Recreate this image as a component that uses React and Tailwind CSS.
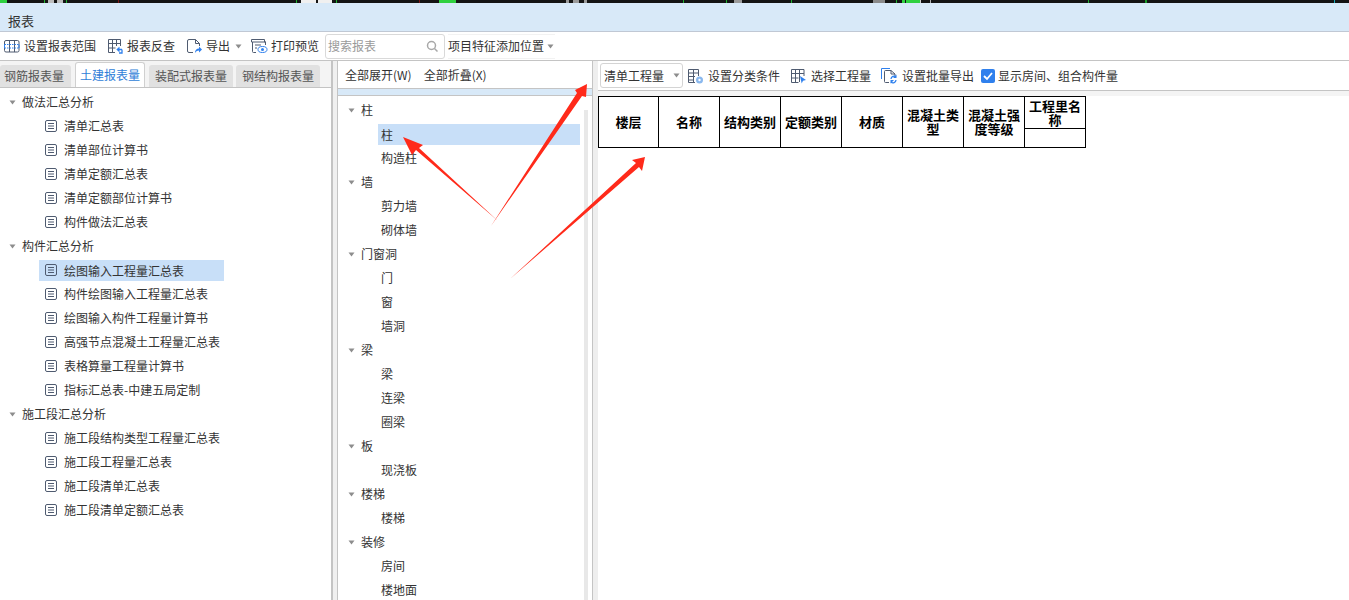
const FONT = "font-['Noto_Sans_CJK_SC','Liberation_Sans',sans-serif]"

const REPORT_TREE = [
  {
    name: '做法汇总分析',
    items: ['清单汇总表', '清单部位计算书', '清单定额汇总表', '清单定额部位计算书', '构件做法汇总表'],
  },
  {
    name: '构件汇总分析',
    items: [
      '绘图输入工程量汇总表',
      '构件绘图输入工程量汇总表',
      '绘图输入构件工程量计算书',
      '高强节点混凝土工程量汇总表',
      '表格算量工程量计算书',
      '指标汇总表-中建五局定制',
    ],
  },
  {
    name: '施工段汇总分析',
    items: ['施工段结构类型工程量汇总表', '施工段工程量汇总表', '施工段清单汇总表', '施工段清单定额汇总表'],
  },
]

const MEMBER_TREE = [
  { name: '柱', items: ['柱', '构造柱'] },
  { name: '墙', items: ['剪力墙', '砌体墙'] },
  { name: '门窗洞', items: ['门', '窗', '墙洞'] },
  { name: '梁', items: ['梁', '连梁', '圈梁'] },
  { name: '板', items: ['现浇板'] },
  { name: '楼梯', items: ['楼梯'] },
  { name: '装修', items: ['房间', '楼地面'] },
]

const COLUMNS = ['楼层', '名称', '结构类别', '定额类别', '材质', '混凝土类型', '混凝土强度等级']

const TICKS = [
  [0, 7, '#2fd13f'], [44, 1, '#1fae2f'], [48, 6, '#bdbdbd'], [57, 6, '#bdbdbd'], [66, 1, '#1fae2f'],
  [118, 1, '#7a1515'], [296, 1, '#1fae2f'], [301, 15, '#f0f0f0'], [318, 14, '#f0f0f0'], [336, 1, '#1fae2f'],
  [419, 1, '#7a1515'], [439, 11, '#2fd13f'], [450, 6, '#2fd13f'], [566, 3, '#9a9a9a'], [573, 6, '#9a9a9a'],
  [584, 3, '#9a9a9a'], [683, 1, '#1fae2f'], [726, 1, '#1fae2f'], [734, 8, '#9a9a9a'], [791, 1, '#1fae2f'],
  [873, 12, '#8a8a8a'], [896, 1, '#1fae2f'], [902, 3, '#2fd13f'], [906, 14, '#2fd13f'], [920, 1, '#d0d0d0'],
  [930, 1, '#b0b0b0'], [1088, 1, '#1fae2f'], [1145, 2, '#1a9a2a'], [1334, 1, '#18a8b8'],
]

const Caret = () => (
  <svg width="9" height="9" viewBox="0 0 9 9" className="shrink-0">
    <path d="M1.500 2.500h6L4.500 6.500z" fill="#8d8d8d" />
  </svg>
)

const DocIcon = () => (
  <svg width="13" height="13" viewBox="0 0 13 13" fill="none" className="shrink-0">
    <rect x="0.500" y="0.500" width="11" height="11" rx="1.500" stroke="#4f5b70" />
    <path d="M3 3.500h6M3 6h6M3 8.500h6" stroke="#4f5b70" />
  </svg>
)

const RangeIcon = () => (
  <svg width="16" height="16" viewBox="0 0 16 16" fill="none" className="shrink-0">
    <path d="M2 2.500h11.500a1.500 1.500 0 0 1 1.500 1.500v8.500a1.500 1.500 0 0 1-1.500 1.500H2A1.500 1.500 0 0 1 .5 12.500V4A1.500 1.500 0 0 1 2 2.500zM5.500 2.500v11.500M10.500 2.500v11.500" stroke="#4f5b70" />
    <path d="M.5 6.500h14.500M.5 10h14.500" stroke="#2f80ed" strokeDasharray="1.500 1" />
    <path d="M.5 6.500V10M15 6.500V10" stroke="#2f80ed" />
  </svg>
)

const CheckIcon = () => (
  <svg width="16" height="16" viewBox="0 0 16 16" fill="none" className="shrink-0">
    <path d="M8 14.500H1.500v-13h12V8M1.500 5.500h12M1.500 10h7M5.500 1.500v13M9.500 1.500V8" stroke="#4f5b70" />
    <path d="M15 11.500h-4.500M12.500 9.500l-2.200 2 2.200 2M15 11.500V15h-3" stroke="#2f80ed" strokeWidth="1.300" />
  </svg>
)

const ExportIcon = () => (
  <svg width="16" height="16" viewBox="0 0 16 16" fill="none" className="shrink-0">
    <path d="M7 14.500H3A1.500 1.500 0 0 1 1.500 13V3A1.500 1.500 0 0 1 3 1.500h6.500l4 4V8M9.500 1.500v4h4" stroke="#4f5b70" />
    <path d="M9 15c0-3 1.500-4.500 4-4.500V8.500l3 3-3 3v-2c-1.500 0-3 .8-4 2.500z" fill="#2f80ed" />
  </svg>
)

const PrintIcon = () => (
  <svg width="17" height="16" viewBox="0 0 17 16" fill="none" className="shrink-0 -mr-[1px]">
    <path d="M5 14.500H2.500A1 1 0 0 1 1.500 13.500V4H.5V1.500h13V4h1v3M1.500 4H15M4 7h6M4 10h2" stroke="#4f5b70" />
    <ellipse cx="11.500" cy="11.500" rx="4.500" ry="3" stroke="#2f80ed" />
    <circle cx="11.500" cy="11.500" r="1.500" fill="#2f80ed" />
  </svg>
)

const ClassifyIcon = () => (
  <svg width="18" height="16" viewBox="0 0 18 16" fill="none" className="shrink-0">
    <path d="M9 14.500H2.500V1.500h10V8M2.500 5h10M2.500 8.500h6.500M2.500 12h5.500M7.500 1.500V14" stroke="#4f5b70" />
    <circle cx="13.500" cy="12" r="3.500" fill="#8ab8ee" />
    <circle cx="13.500" cy="12" r="1.200" fill="#fff" />
  </svg>
)

const PickIcon = () => (
  <svg width="18" height="16" viewBox="0 0 18 16" fill="none" className="shrink-0">
    <path d="M9.500 14.500H2.500v-13H15V8M2.500 5.500H15M2.500 10h7M6.500 1.500v13M10.500 1.500V14" stroke="#4f5b70" />
    <path d="M11 8l6 4-3 .7-1.300 2.800z" fill="#2f80ed" />
  </svg>
)

const BatchIcon = () => (
  <svg width="18" height="17" viewBox="0 0 18 17" fill="none" className="shrink-0">
    <path d="M1.500 12V1.500H10" stroke="#2f80ed" />
    <path d="M9 15.500H5.500a1 1 0 0 1-1-1v-10a1 1 0 0 1 1-1H11l4 3.500v2M11 3.500V7h4" stroke="#4f5b70" />
    <path d="M11 12a3 3 0 0 1 5-2M16 13a3 3 0 0 1-5 2" stroke="#2f80ed" strokeWidth="1.300" />
    <path d="M16.500 7.500V11H13zM10.500 16.500V13H14z" fill="#2f80ed" />
  </svg>
)

const ToolButton = ({ icon, label, caret }) => (
  <div className="flex items-center gap-[4px] shrink-0">
    {icon}
    <span className="whitespace-nowrap">{label}</span>
    {caret && <Caret />}
  </div>
)

const TopStrip = () => (
  <svg width="1349" height="3" className="block bg-[#141414]">
    {TICKS.map(([x, w, fill]) => (
      <rect key={x} x={x} y="0" width={w} height="3" fill={fill} />
    ))}
  </svg>
)

const Toolbar = () => (
  <div className="h-[28px] bg-white flex items-center pl-[4px] shrink-0">
    <ToolButton icon={<RangeIcon />} label="设置报表范围" />
    <div className="ml-[11px]"><ToolButton icon={<CheckIcon />} label="报表反查" /></div>
    <div className="ml-[11px]"><ToolButton icon={<ExportIcon />} label="导出" caret /></div>
    <div className="ml-[8px]"><ToolButton icon={<PrintIcon />} label="打印预览" /></div>
    <div className="ml-[6px] w-[120px] h-[25px] border border-[#d9d9d9] rounded-[3px] flex items-center justify-between pl-[2px] pr-[6px] text-[#9a9a9a] shrink-0">
      <span>搜索报表</span>
      <svg width="12" height="12" viewBox="0 0 12 12" fill="none">
        <circle cx="5.500" cy="5.500" r="4" stroke="#a8a8a8" strokeWidth="1.500" />
        <path d="M8.500 8.500l3 3" stroke="#a8a8a8" strokeWidth="1.500" />
      </svg>
    </div>
    <div className="ml-[3px] h-[25px] flex items-center gap-[2px] border-y border-[#f2f2f2]">
      <span>项目特征添加位置</span>
      <Caret />
    </div>
  </div>
)

const ReportTabs = () => (
  <div className="h-[26px] flex items-end bg-[#f4f4f4] shrink-0">
    <div className="w-[71px] h-[22px] bg-[#e1e1e1] rounded-t-[3px] flex items-center pl-[4px] text-[#555]">钢筋报表量</div>
    <div className="ml-[4px] w-[70px] h-[25px] bg-white border border-b-0 border-[#d0d0d0] rounded-t-[3px] flex items-center justify-center text-[#2f7ed8]">土建报表量</div>
    <div className="ml-[4px] w-[84px] h-[22px] bg-[#e1e1e1] rounded-t-[3px] flex items-center justify-center text-[#555]">装配式报表量</div>
    <div className="ml-[3px] w-[84px] h-[22px] bg-[#e1e1e1] rounded-t-[3px] flex items-center justify-center text-[#555]">钢结构报表量</div>
  </div>
)

const ReportPane = () => (
  <div className="w-[331px] shrink-0 flex flex-col bg-white">
    <ReportTabs />
    <div className="flex-1 border-t border-[#c4c4c4] pt-[2px]">
      {REPORT_TREE.map((group) => (
        <div key={group.name}>
          <div className="h-[24px] flex items-center pl-[8px] gap-[5px]">
            <Caret />
            <span>{group.name}</span>
          </div>
          {group.items.map((item) => (
            <div
              key={item}
              className={`flex items-center ml-[39px] pl-[6px] gap-[6px] ${item === '绘图输入工程量汇总表' ? 'w-[185px] h-[21px] mt-[2px] mb-[1px] bg-[#c8dff8]' : 'h-[24px]'}`}
            >
              <DocIcon />
              <span className="whitespace-nowrap">{item}</span>
            </div>
          ))}
        </div>
      ))}
    </div>
  </div>
)

const MemberPane = () => (
  <div className="w-[254px] shrink-0 flex flex-col">
    <div className="h-[28px] bg-white flex items-center pl-[7px] pt-[1px] gap-[12px] border-b border-[#c4c4c4] shrink-0">
      <span>全部展开(W)</span>
      <span>全部折叠(X)</span>
    </div>
    <div className="h-[7px] bg-[#d8e9f8] border-b border-[#c4c4c4] shrink-0" />
    <div className="relative flex-1 bg-white pt-[2px]">
      <div className="absolute right-[4px] top-[14px] bottom-0 w-[4px] bg-[#e8e8e8]" />
      {MEMBER_TREE.map((group) => (
        <div key={group.name}>
          <div className="h-[24px] flex items-center pl-[9px] gap-[5px]">
            <Caret />
            <span>{group.name}</span>
          </div>
          {group.items.map((item, i) => (
            <div
              key={item}
              className={`ml-[40px] pl-[3px] flex items-center ${group.name === '柱' && i === 0 ? 'w-[202px] h-[21px] mt-[2px] mb-[1px] bg-[#c8dff8]' : 'h-[24px]'}`}
            >
              {item}
            </div>
          ))}
        </div>
      ))}
    </div>
  </div>
)

const QuantityTable = () => (
  <table className="border-collapse table-fixed w-[487px] font-bold text-black text-center text-[13px] leading-[14px]">
    <tbody>
      <tr className="h-[32px]">
        {COLUMNS.map((col, i) => (
          <td key={col} rowSpan={2} className={`border border-black p-0 ${i === 0 ? 'w-[60px]' : 'w-[61px]'}`}>{col}</td>
        ))}
        <td className="border border-black w-[61px] p-0">工程里名称</td>
      </tr>
      <tr className="h-[19px]">
        <td className="border border-black p-0" />
      </tr>
    </tbody>
  </table>
)

const ResultPane = () => (
  <div className="flex-1 min-w-0 flex flex-col bg-white">
    <div className="h-[30px] flex items-center pl-[2px] border-b border-[#c4c4c4] shrink-0">
      <div className="w-[83px] h-[25px] border border-[#d4d4d4] rounded-[3px] flex items-center justify-between pl-[3px] pr-[1px] shrink-0">
        <span>清单工程量</span>
        <Caret />
      </div>
      <div className="ml-[3px] flex items-center gap-[9px]">
        <ToolButton icon={<ClassifyIcon />} label="设置分类条件" />
        <ToolButton icon={<PickIcon />} label="选择工程量" />
        <ToolButton icon={<BatchIcon />} label="设置批量导出" />
      </div>
      <div className="ml-[7px] flex items-center gap-[3px]">
        <div className="w-[14px] h-[14px] rounded-[2px] bg-[#2f80ed] flex items-center justify-center">
          <svg width="10" height="10" viewBox="0 0 10 10" fill="none">
            <path d="M1 5l3 3 5-6" stroke="#fff" strokeWidth="1.800" />
          </svg>
        </div>
        <span>显示房间、组合构件量</span>
      </div>
    </div>
    <div className="h-[5px] bg-[#f4f4f4] shrink-0" />
    <div className="flex-1"><QuantityTable /></div>
  </div>
)

// tapered red annotation arrows drawn on the screenshot
const Arrows = () => (
  <svg width="1349" height="600" className="absolute left-0 top-0 pointer-events-none">
    <path d="M491 226L577 93L575 90L587 84L586 97L582 96z" fill="#ff2a1a" />
    <path d="M498 221L416 150L412 155L403 137L423 145L419 148z" fill="#ff2a1a" />
    <path d="M510 279L636 163L632 160L645 157L642 171L639 167z" fill="#ff2a1a" />
  </svg>
)

export default function App() {
  return (
    <div className={`relative w-[1349px] h-[600px] overflow-hidden flex flex-col bg-white text-[12px] text-[#333] ${FONT}`}>
      <TopStrip />
      <div className="h-[29px] bg-[#d8e9f8] border-b border-[#c0c8d4] flex items-end pl-[8px] pb-[1px] text-[13px] shrink-0">报表</div>
      <Toolbar />
      <div className="h-[1px] bg-[#c4c4c4] shrink-0" />
      <div className="flex-1 min-h-0 flex">
        <ReportPane />
        <div className="w-[7px] shrink-0 bg-[#f0f0f0] border-l-2 border-r border-[#c4c4c4]" />
        <MemberPane />
        <div className="w-[6px] shrink-0 bg-[#eeeeee] border-l border-[#c4c4c4]" />
        <ResultPane />
      </div>
      <Arrows />
    </div>
  )
}
